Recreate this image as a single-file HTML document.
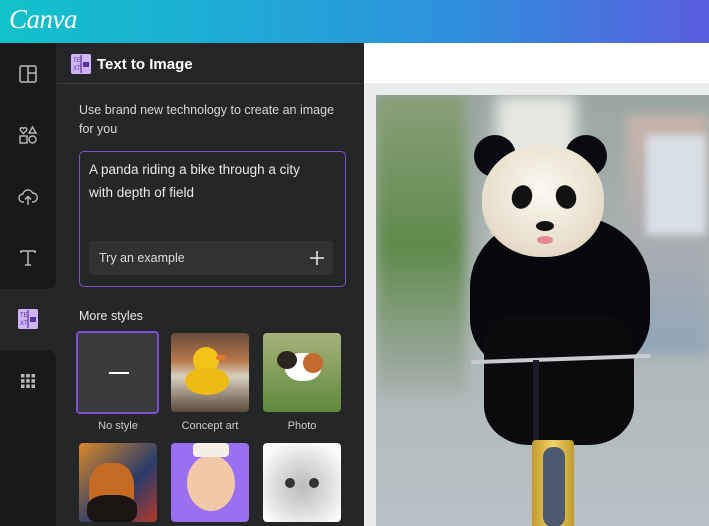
<!DOCTYPE html>
<html><head><meta charset="utf-8"><style>
*{margin:0;padding:0;box-sizing:border-box}
body{width:709px;height:526px;overflow:hidden;background:#252627;font-family:"Liberation Sans",sans-serif;position:relative}
.top{position:absolute;left:0;top:0;width:709px;height:43px;background:linear-gradient(90deg,#12c2cb 0%,#1fa9d6 35%,#2f8fdc 65%,#5b5ddf 100%)}
.logo{position:absolute;left:9px;top:4px;color:#fff;font-family:"Liberation Serif",serif;font-style:italic;font-size:27px;letter-spacing:-0.5px}
.rail1{position:absolute;left:0;top:43px;width:56px;height:246px;background:#18191b;border-bottom-right-radius:8px}
.rail2{position:absolute;left:0;top:350px;width:56px;height:176px;background:#18191b;border-top-right-radius:8px}
.ic{position:absolute;left:18px}
.hdr{position:absolute;left:57px;top:43px;width:306px;height:41px;border-bottom:1px solid #3a3b3d}
.title{position:absolute;left:97px;top:56px;color:#fff;font-size:15px;font-weight:bold}
.txt{color:#d5d6d8;font-size:12.5px}
.desc{position:absolute;left:79px;top:101px;line-height:19px;width:268px}
.box{position:absolute;left:79px;top:151px;width:267px;height:136px;border:1.5px solid #7d4fd1;border-radius:5px}
.box p{position:absolute;left:9px;top:7px;color:#e8e8ea;font-size:13.5px;line-height:22.5px}
.try{position:absolute;left:9px;top:89px;width:244px;height:34px;background:#313234;border-radius:4px}
.try span{position:absolute;left:10px;top:10px;color:#ddd;font-size:12.5px}
.more{position:absolute;left:79px;top:309px;color:#e8e8ea;font-size:12.5px}
.th{position:absolute;width:78px;height:79px;border-radius:4px;overflow:hidden}
.lbl{position:absolute;width:90px;text-align:center;color:#c8c9cb;font-size:11px;top:420px}
.canvas{position:absolute;left:364px;top:43px;width:345px;height:483px;background:#ebeced}
.wbar{position:absolute;left:364px;top:43px;width:345px;height:40px;background:#fff}
.img{position:absolute;left:376px;top:95px;width:333px;height:431px;overflow:hidden;background:linear-gradient(180deg,#9aa7a2 0%,#aeb7b6 50%,#b9c0c6 100%)}
</style></head><body>
<div class="top"><div class="logo">Canva</div></div>
<div class="rail1"></div><div class="rail2"></div>
<svg class="ic" style="top:64px" width="20" height="20" viewBox="0 0 20 20" fill="none" stroke="#bbb" stroke-width="1.5"><rect x="2" y="2" width="16" height="16" rx="1.5"/><path d="M10 2v16M10 9h8"/></svg>
<svg class="ic" style="top:125px" width="20" height="20" viewBox="0 0 20 20" fill="none" stroke="#bbb" stroke-width="1.4"><path d="M5.5 8.5l-3-3a1.8 1.8 0 013-2 1.8 1.8 0 013 2z"/><path d="M14.5 2l3.5 6h-7z"/><rect x="2" y="11" width="7" height="7"/><circle cx="14.5" cy="14.5" r="3.5"/></svg>
<svg class="ic" style="top:187px" width="20" height="20" viewBox="0 0 20 20" fill="none" stroke="#bbb" stroke-width="1.4"><path d="M6 15H5a4 4 0 010-8 5 5 0 019.5-1A4 4 0 0115 15h-1"/><path d="M10 18v-8M7 12.5l3-3 3 3"/></svg>
<svg class="ic" style="top:248px" width="20" height="20" viewBox="0 0 20 20" fill="none" stroke="#bbb" stroke-width="1.5"><path d="M3 5V3h14v2M10 3v14M7 17h6"/></svg>
<svg class="ic" style="top:309px" width="20" height="20" viewBox="0 0 20 20"><rect width="20" height="20" rx="2" fill="#cfb5f5"/><path d="M10 1v18" stroke="#5a2fa0" stroke-width="1.2"/><text x="2" y="8" font-size="6" fill="#5a2fa0">TE</text><text x="2" y="16" font-size="6" fill="#5a2fa0">XT</text><rect x="12" y="8" width="6" height="5" fill="#5a2fa0"/></svg>
<svg class="ic" style="top:371px" width="20" height="20" viewBox="0 0 20 20" fill="#bbb"><rect x="3" y="3" width="3.5" height="3.5"/><rect x="8.2" y="3" width="3.5" height="3.5"/><rect x="13.5" y="3" width="3.5" height="3.5"/><rect x="3" y="8.2" width="3.5" height="3.5"/><rect x="8.2" y="8.2" width="3.5" height="3.5"/><rect x="13.5" y="8.2" width="3.5" height="3.5"/><rect x="3" y="13.5" width="3.5" height="3.5"/><rect x="8.2" y="13.5" width="3.5" height="3.5"/><rect x="13.5" y="13.5" width="3.5" height="3.5"/></svg>
<div class="hdr"></div>
<svg style="position:absolute;left:71px;top:54px" width="20" height="20" viewBox="0 0 20 20"><rect width="20" height="20" rx="2" fill="#cfb5f5"/><path d="M10 1v18" stroke="#5a2fa0" stroke-width="1.2"/><text x="2" y="8" font-size="6" fill="#5a2fa0">TE</text><text x="2" y="16" font-size="6" fill="#5a2fa0">XT</text><rect x="12" y="8" width="6" height="5" fill="#5a2fa0"/></svg>
<div class="title">Text to Image</div>
<div class="desc txt">Use brand new technology to create an image for you</div>
<div class="box"><p>A panda riding a bike through a city<br>with depth of field</p>
<div class="try"><span>Try an example</span><svg style="position:absolute;right:9px;top:10px" width="14" height="14"><path d="M7 0v14M0 7h14" stroke="#eee" stroke-width="1.5"/></svg></div></div>
<div class="more">More styles</div>
<div class="th" style="left:76px;top:331px;width:83px;height:83px;border:2px solid #7d4fd1;background:#3a3b3d"><div style="position:absolute;left:31px;top:39px;width:20px;height:2px;background:#fff"></div></div>
<div class="th" style="left:171px;top:333px;background:linear-gradient(180deg,#6b4a3c 0%,#b7784a 35%,#d8d0c0 55%,#5a4a3a 100%)"><div style="position:absolute;left:22px;top:14px;width:26px;height:26px;border-radius:50%;background:#f1c417"></div><div style="position:absolute;left:14px;top:34px;width:44px;height:28px;border-radius:50%;background:#eebb15"></div><div style="position:absolute;left:45px;top:22px;width:10px;height:5px;background:#e8732a;border-radius:3px"></div></div>
<div class="th" style="left:263px;top:333px;background:linear-gradient(180deg,#a8b27a,#5e8a3c)"><div style="position:absolute;left:22px;top:20px;width:36px;height:28px;border-radius:45%;background:#fff"></div><div style="position:absolute;left:14px;top:18px;width:20px;height:18px;border-radius:50%;background:#2a2520"></div><div style="position:absolute;left:40px;top:20px;width:20px;height:20px;border-radius:50%;background:#c46a2e"></div></div>
<div class="lbl" style="left:73px">No style</div>
<div class="lbl" style="left:165px">Concept art</div>
<div class="lbl" style="left:257px">Photo</div>
<div class="th" style="left:79px;top:443px;background:linear-gradient(135deg,#d88a2a 0%,#2a3a6a 60%,#b23a2a 100%)"><div style="position:absolute;left:10px;top:20px;width:45px;height:55px;border-radius:40%;background:#c46a22"></div><div style="position:absolute;left:8px;top:52px;width:50px;height:30px;background:#1a1512;border-radius:40%"></div></div>
<div class="th" style="left:171px;top:443px;background:#9a6ff0"><div style="position:absolute;left:16px;top:12px;width:48px;height:56px;border-radius:50%;background:#f2c9a8"></div><div style="position:absolute;left:22px;top:0;width:36px;height:14px;background:#f3eee6;border-radius:4px"></div></div>
<div class="th" style="left:263px;top:443px;background:radial-gradient(circle at 50% 55%,#bbb 0%,#ddd 45%,#fafafa 80%)"><div style="position:absolute;left:22px;top:35px;width:10px;height:10px;border-radius:50%;background:#333"></div><div style="position:absolute;left:46px;top:35px;width:10px;height:10px;border-radius:50%;background:#333"></div></div>
<div class="canvas"></div><div class="wbar"></div>
<div class="img">
<div style="position:absolute;left:0;top:0;width:90px;height:300px;background:linear-gradient(180deg,#8aa07a,#5f8a4c 50%,#a7b0ad);filter:blur(6px)"></div>
<div style="position:absolute;left:120px;top:0;width:80px;height:180px;background:#e7e8e4;filter:blur(8px)"></div>
<div style="position:absolute;left:250px;top:20px;width:83px;height:240px;background:linear-gradient(180deg,#c9b4aa,#8fa6b8);filter:blur(6px)"></div>
<div style="position:absolute;left:270px;top:40px;width:60px;height:100px;background:#d9dfe6;filter:blur(4px)"></div>
<div style="position:absolute;left:94px;top:120px;width:180px;height:160px;border-radius:45% 45% 35% 35%;background:#07070c"></div>
<div style="position:absolute;left:108px;top:220px;width:150px;height:130px;border-radius:20% 20% 30% 30%;background:#0b0a0d"></div>
<div style="position:absolute;left:98px;top:40px;width:42px;height:42px;border-radius:50%;background:#0a0a10"></div>
<div style="position:absolute;left:189px;top:40px;width:42px;height:42px;border-radius:50%;background:#0a0a10"></div>
<div style="position:absolute;left:106px;top:50px;width:122px;height:112px;border-radius:48%;background:radial-gradient(circle at 50% 40%,#fbf9f2,#e7dcc8 70%,#c9b49a)"></div>
<div style="position:absolute;left:136px;top:90px;width:20px;height:24px;border-radius:50%;background:#111;transform:rotate(20deg)"></div>
<div style="position:absolute;left:180px;top:90px;width:20px;height:24px;border-radius:50%;background:#111;transform:rotate(-20deg)"></div>
<div style="position:absolute;left:160px;top:126px;width:18px;height:10px;border-radius:50%;background:#111"></div>
<div style="position:absolute;left:161px;top:141px;width:16px;height:8px;border-radius:50%;background:#e58a93"></div>
<div style="position:absolute;left:95px;top:262px;width:180px;height:4px;background:#c9cbd0;border-radius:2px;transform:rotate(-2deg)"></div>
<div style="position:absolute;left:157px;top:265px;width:6px;height:90px;background:#1a1d28"></div>
<div style="position:absolute;left:156px;top:345px;width:42px;height:90px;background:linear-gradient(90deg,#c09a2a,#f2d36a,#c09a2a);border-radius:4px 4px 0 0"></div>
<div style="position:absolute;left:167px;top:352px;width:22px;height:80px;border-radius:10px;background:#4c5a70"></div>
</div>
</body></html>
